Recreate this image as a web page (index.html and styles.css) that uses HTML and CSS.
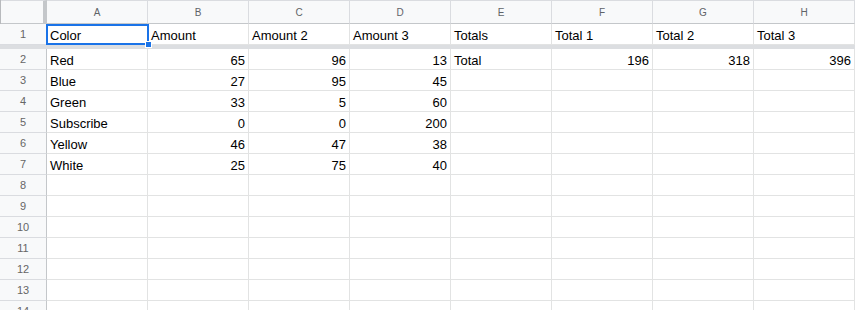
FILE: index.html
```html
<!DOCTYPE html>
<html lang="en">
<head>
    <meta charset="UTF-8">
    <meta name="viewport" content="width=device-width, initial-scale=1.0">
    <title>Colors - Sheet1</title>
    <link rel="stylesheet" href="styles.css">
</head>
<body>
    <div class="sheet" id="sheet">
        <!-- selected cell A1 -->
        <div class="selection"><span class="fill-handle"></span></div>
    </div>

    <script>
        const columns = ['A', 'B', 'C', 'D', 'E', 'F', 'G', 'H'];
        const totalRows = 14;

        // Sheet contents, row by row (numbers are right aligned)
        const data = [
            ['Color', 'Amount', 'Amount 2', 'Amount 3', 'Totals', 'Total 1', 'Total 2', 'Total 3'],
            ['Red', 65, 96, 13, 'Total', 196, 318, 396],
            ['Blue', 27, 95, 45],
            ['Green', 33, 5, 60],
            ['Subscribe', 0, 0, 200],
            ['Yellow', 46, 47, 38],
            ['White', 25, 75, 40]
        ];

        const sheet = document.getElementById('sheet');

        function addCell(className, text) {
            const cell = document.createElement('div');
            cell.className = className;
            if (text !== undefined) cell.textContent = text;
            sheet.appendChild(cell);
        }

        // Column header row
        addCell('corner');
        columns.forEach(col => addCell('col-header', col));

        for (let r = 1; r <= totalRows; r++) {
            addCell('row-header', r);
            const values = data[r - 1] || [];
            columns.forEach((col, c) => {
                const value = values[c];
                if (typeof value === 'number') {
                    addCell('cell num', value);
                } else {
                    addCell('cell', value);
                }
            });

            // Frozen row divider below row 1
            if (r === 1) addCell('freeze-bar');
        }
    </script>
</body>
</html>
```

FILE: styles.css
```css
body {
    margin: 0;
    background-color: #fff;
    font-family: "Liberation Sans", Arial, sans-serif;
    overflow: hidden;
}

.sheet {
    position: relative;
    display: grid;
    grid-template-columns: 46px repeat(8, 101px);
    grid-template-rows: 24px 21px 4px repeat(13, 21px);
    border-left: 1px solid #b8babd;
    width: 855px;
    box-sizing: border-box;
}

.corner,
.col-header,
.row-header,
.cell {
    box-sizing: border-box;
    white-space: nowrap;
    overflow: hidden;
}

.corner {
    background-color: #f8f9fa;
    border-top: 1px solid #dadce0;
    border-bottom: 1px solid #c4c7ca;
    border-right: 4px solid #c4c7ca;
}

.col-header {
    display: flex;
    align-items: center;
    justify-content: center;
    background-color: #f8f9fa;
    border-top: 1px solid #dadce0;
    border-right: 1px solid #dadce0;
    border-bottom: 1px solid #c4c7ca;
    color: #5f6368;
    font-size: 10px;
}

.row-header {
    display: flex;
    align-items: center;
    justify-content: center;
    background-color: #f8f9fa;
    border-right: 1px solid #c4c7ca;
    border-bottom: 1px solid #dadce0;
    color: #666;
    font-size: 11px;
    margin-left: -1px;
}

.cell {
    border-right: 1px solid #e2e3e3;
    border-bottom: 1px solid #e2e3e3;
    padding: 3px 3px 0 3px;
    font-size: 13px;
    line-height: 17px;
    color: #000;
}

.cell.num {
    text-align: right;
}

.freeze-bar {
    grid-column: 1 / -1;
    background-color: #dcdee1;
    margin-left: -1px;
}

.selection {
    position: absolute;
    left: 45px;
    top: 24px;
    width: 103px;
    height: 21px;
    border: 2px solid #1a73e8;
    box-sizing: border-box;
}

.fill-handle {
    position: absolute;
    right: -5px;
    bottom: -5px;
    width: 7px;
    height: 7px;
    background-color: #1a73e8;
    border: 1px solid #fff;
    box-sizing: border-box;
}
```
